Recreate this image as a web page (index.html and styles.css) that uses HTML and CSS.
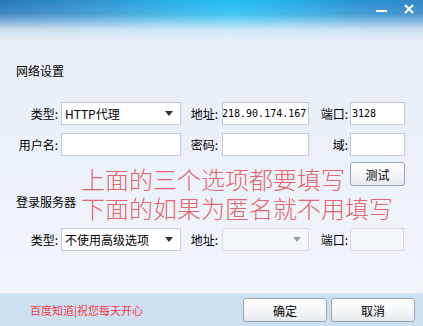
FILE: index.html
```html
<!DOCTYPE html>
<html lang="zh-CN">

<head>
    <meta charset="UTF-8">
    <meta name="viewport" content="width=device-width, initial-scale=1.0">
    <title>网络设置</title>
    <link rel="stylesheet" href="styles.css">
</head>

<body>
    <div class="window">
        <div class="titlebar">
            <span class="title-btn min-btn">
                <svg width="12" height="4" viewBox="0 0 12 4"><rect x="0" y="1" width="11" height="2" fill="#fff"/></svg>
            </span>
            <span class="title-btn close-btn">
                <svg width="10" height="10" viewBox="0 0 10 10"><path d="M1 1 L9 9 M9 1 L1 9" stroke="#fff" stroke-width="2" fill="none"/></svg>
            </span>
        </div>

        <div class="content">
            <div class="section-title">网络设置</div>

            <div class="form-row first-row">
                <label class="lbl">类型:</label>
                <div class="field select">HTTP代理<span class="arrow"></span></div>
                <label class="lbl lbl-mid">地址:</label>
                <div class="field mono clip">218.90.174.167</div>
                <label class="lbl lbl-end">端口:</label>
                <div class="field mono">3128</div>
            </div>

            <div class="form-row">
                <label class="lbl">用户名:</label>
                <div class="field"></div>
                <label class="lbl lbl-mid">密码:</label>
                <div class="field"></div>
                <label class="lbl lbl-end">域:</label>
                <div class="field"></div>
            </div>

            <div class="test-row">
                <button class="btn test-btn">测试</button>
            </div>

            <div class="section-title server-title">登录服务器</div>

            <div class="form-row server-row">
                <label class="lbl">类型:</label>
                <div class="field select">不使用高级选项<span class="arrow"></span></div>
                <label class="lbl lbl-mid">地址:</label>
                <div class="field select disabled"><span class="arrow"></span></div>
                <label class="lbl lbl-end">端口:</label>
                <div class="field disabled short"></div>
            </div>

            <div class="note">
                <div class="note-line">上面的三个选项都要填写</div>
                <div class="note-line">下面的如果为匿名就不用填写</div>
            </div>
        </div>

        <div class="footer">
            <span class="footer-text">百度知道|祝您每天开心</span>
            <div class="footer-btns">
                <button class="btn big-btn">确定</button>
                <button class="btn big-btn">取消</button>
            </div>
        </div>
    </div>
</body>
</html>
```

FILE: styles.css
```css
body {
    margin: 0;
    font-family: "Noto Sans CJK SC", "Liberation Sans", sans-serif;
    font-size: 12px;
    color: #000;
}

.window {
    width: 423px;
    height: 326px;
    overflow: hidden;
    display: flex;
    flex-direction: column;
    background: linear-gradient(180deg, #eaf0f8 0, #eaf0f8 40%, #f3f7fc 100%);
}

.titlebar {
    height: 40px;
    flex: none;
    display: flex;
    justify-content: flex-end;
    align-items: flex-start;
    background:
        linear-gradient(180deg, rgba(234, 240, 248, 0) 0, rgba(234, 240, 248, 0.15) 14px, rgba(234, 240, 248, 0.85) 30px, #eaf0f8 42px),
        linear-gradient(90deg, #2577ba 0, #2f92cf 22%, #28b0e6 40%, #22bff1 55%, #27a9e2 72%, #2890d0 85%, #2d86c6 100%);
}

.title-btn {
    display: flex;
    justify-content: center;
    margin-top: 4px;
}

.min-btn {
    width: 20px;
    margin-top: 9px;
    margin-right: 12px;
}

.close-btn {
    width: 10px;
    margin-right: 9px;
}

.content {
    flex: 1;
    position: relative;
    padding-top: 23px;
}

.section-title {
    padding-left: 16px;
    line-height: 16px;
}

.form-row {
    display: grid;
    grid-template-columns: 61px 120px 41px 87px 41px 55px;
    align-items: center;
    height: 23px;
    margin-top: 8px;
}

.first-row {
    margin-top: 23px;
}

.lbl {
    text-align: right;
    padding-right: 3px;
    white-space: nowrap;
}

.lbl-mid {
    padding-right: 4px;
}

.lbl-end {
    padding-right: 2px;
}

.field {
    position: relative;
    height: 21px;
    line-height: 21px;
    border: 1px solid #c3cad3;
    background: #fff;
    padding-left: 3px;
    white-space: nowrap;
    overflow: hidden;
}

.mono {
    font-family: "DejaVu Sans Mono", "Liberation Mono", monospace;
    font-size: 10px;
    padding-left: 1px;
}

.clip {
    text-indent: -2px;
}

.select .arrow {
    position: absolute;
    right: 7px;
    top: 8px;
    width: 0;
    height: 0;
    border-left: 4px solid transparent;
    border-right: 4px solid transparent;
    border-top: 5px solid #333;
}

.disabled {
    background: #f4f7fb;
    border-color: #d5dbe3;
}

.disabled .arrow {
    border-top-color: #9a9fa6;
}

.short {
    width: 49px;
}

.test-row {
    display: flex;
    justify-content: flex-end;
    padding-right: 18px;
    margin-top: 6px;
}

.btn {
    font-family: "Noto Sans CJK SC", "Liberation Sans", sans-serif;
    font-size: 12px;
    color: #000;
    border: 1px solid #9aa4ae;
    border-radius: 3px;
    background: linear-gradient(180deg, #ffffff 0, #f4f6f8 50%, #e6e9ed 100%);
    padding: 0;
    cursor: pointer;
}

.test-btn {
    width: 55px;
    height: 24px;
}

.server-title {
    margin-top: 8px;
}

.server-row {
    margin-top: 18px;
}

.note {
    position: absolute;
    left: 81px;
    top: 125px;
    font-size: 24px;
    font-weight: 300;
    color: #e2666f;
    white-space: nowrap;
}

.note-line {
    height: 29px;
    line-height: 28px;
}

.footer {
    height: 32px;
    flex: none;
    display: flex;
    align-items: center;
    background: #cde0f1;
    border-top: 1px solid #dfeaf5;
}

.footer-text {
    padding-left: 30px;
    font-size: 11px;
    color: #f33a48;
}

.footer-btns {
    margin-left: auto;
    display: flex;
    gap: 4px;
    padding-right: 8px;
}

.big-btn {
    width: 84px;
    height: 24px;
}
```
